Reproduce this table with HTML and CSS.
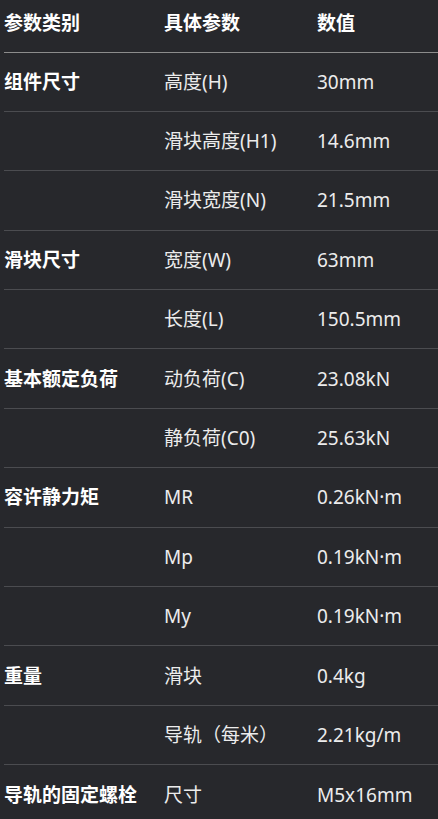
FILE: index.html
```html
<!DOCTYPE html>
<html lang="zh-CN">
<head>
    <meta charset="UTF-8">
    <meta name="viewport" content="width=device-width, initial-scale=1.0">
    <title>参数表</title>
    <link rel="stylesheet" href="styles.css">
</head>
<body>

    <!-- Tableau des paramètres -->
    <table class="specs">
        <thead>
            <tr>
                <th class="col-cat">参数类别</th>
                <th class="col-name">具体参数</th>
                <th>数值</th>
            </tr>
        </thead>
        <tbody>
            <tr><td class="cat">组件尺寸</td><td>高度(H)</td><td>30mm</td></tr>
            <tr><td></td><td>滑块高度(H1)</td><td>14.6mm</td></tr>
            <tr><td></td><td>滑块宽度(N)</td><td>21.5mm</td></tr>
            <tr><td class="cat">滑块尺寸</td><td>宽度(W)</td><td>63mm</td></tr>
            <tr><td></td><td>长度(L)</td><td>150.5mm</td></tr>
            <tr><td class="cat">基本额定负荷</td><td>动负荷(C)</td><td>23.08kN</td></tr>
            <tr><td></td><td>静负荷(C0)</td><td>25.63kN</td></tr>
            <tr><td class="cat">容许静力矩</td><td>MR</td><td>0.26kN·m</td></tr>
            <tr><td></td><td>Mp</td><td>0.19kN·m</td></tr>
            <tr><td></td><td>My</td><td>0.19kN·m</td></tr>
            <tr><td class="cat">重量</td><td>滑块</td><td>0.4kg</td></tr>
            <tr><td></td><td>导轨（每米）</td><td>2.21kg/m</td></tr>
            <tr><td class="cat">导轨的固定螺栓</td><td>尺寸</td><td>M5x16mm</td></tr>
        </tbody>
    </table>

</body>
</html>
```

FILE: styles.css
```css
body {
    margin: 0;
    padding: 0 0 0 4px;
    background-color: #27282c;
    color: #ececec;
    font-family: "Noto Sans", "Noto Sans CJK SC", sans-serif;
    font-size: 19px;
    overflow: hidden;
}

.specs {
    width: 434px;
    border-collapse: collapse;
    table-layout: fixed;
}

.specs th,
.specs td {
    padding: 0;
    text-align: left;
    vertical-align: middle;
    white-space: nowrap;
    line-height: 24px;
}

.col-cat { width: 160px; }
.col-name { width: 153px; }

/* En-tête */
.specs th {
    height: 52px;
    padding-bottom: 6px;
    box-sizing: border-box;
    font-weight: bold;
    color: #ffffff;
    border-bottom: 1px solid #8c8c8c;
}

/* Lignes */
.specs tbody tr { height: 59.4px; }
.specs tbody tr + tr td { border-top: 1px solid #4b4c50; }

.cat {
    font-weight: bold;
    color: #ffffff;
}
```
